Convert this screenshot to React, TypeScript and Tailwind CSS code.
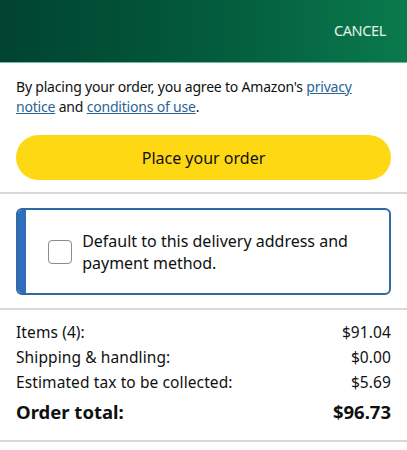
export default function App() {
  const rows = [
    { label: "Items (4):", value: "$91.04" },
    { label: "Shipping & handling:", value: "$0.00" },
    { label: "Estimated tax to be collected:", value: "$5.69" },
  ];

  return (
    <div className="w-[407px] h-[450px] bg-white overflow-hidden text-[#0f1111] font-['Noto_Sans',sans-serif]">
      <header className="h-[63px] flex items-center justify-end pr-[21px] bg-gradient-to-r from-[#00432f] via-[#035a3c] to-[#0a7a4c] border-b border-[#6fb9a0]">
        <span className="text-[14.5px] text-white/90 tracking-tight">CANCEL</span>
      </header>

      <div className="px-4 pt-[14px]">
        <p className="text-[14px] leading-[20px] tracking-[-0.2px]">
          By placing your order, you agree to Amazon's{" "}
          <a className="text-[#2a6496] underline">privacy notice</a> and{" "}
          <a className="text-[#2a6496] underline">conditions of use</a>.
        </p>
        <button className="mt-[18px] w-full h-[45px] rounded-full bg-[#ffd814] text-[16px] text-[#0f1111]">
          Place your order
        </button>
      </div>

      <div className="mt-[12px] h-[2px] bg-[#d5d9d9]" />

      <div className="px-4 pt-[14px]">
        <div className="h-[87px] flex rounded-[6px] border-2 border-[#2f6aa0] overflow-hidden">
          <div className="w-[11px] bg-[#2f6ebd]" />
          <label className="flex items-center gap-[10px] pl-[22px] pr-4">
            <span className="w-[24px] h-[24px] shrink-0 rounded-[4px] border-[1.5px] border-[#888c8c] bg-white" />
            <span className="text-[16px] leading-[22px]">
              Default to this delivery address and payment method.
            </span>
          </label>
        </div>
      </div>

      <div className="mt-[13px] h-[2px] bg-[#d5d9d9]" />

      <div className="px-4 pt-[10px]">
        {rows.map((r) => (
          <div key={r.label} className="h-[25px] flex items-center justify-between text-[15.5px] tracking-[0.1px]">
            <span>{r.label}</span>
            <span>{r.value}</span>
          </div>
        ))}
        <div className="h-[34px] flex items-center justify-between text-[18.5px] font-bold">
          <span>Order total:</span>
          <span>$96.73</span>
        </div>
      </div>

      <div className="mt-[11px] h-[2px] bg-[#d5d9d9]" />
    </div>
  );
}
